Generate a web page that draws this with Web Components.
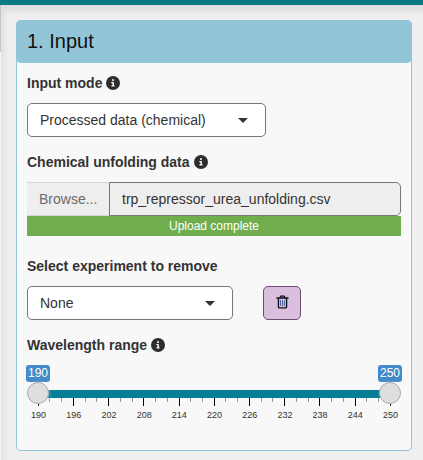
<!DOCTYPE html>
<html lang="en">
<head>
<meta charset="utf-8">
<title>Input</title>
<style>
html,body{margin:0;height:100%}
body{font:14px/20px "Liberation Sans",Arial,sans-serif;color:#333;background:#efefef;overflow:hidden}
</style>
</head>
<body>
<app-shell>
  <input-card heading="1. Input">
    <field-label info>Input mode</field-label>
    <select-box style="width:239px;margin-top:10px">Processed data (chemical)</select-box>
    <field-label info style="margin-top:15px">Chemical unfolding data</field-label>
    <file-field filename="trp_repressor_urea_unfolding.csv" status="Upload complete" style="margin-top:10px"></file-field>
    <field-label style="margin-top:20px">Select experiment to remove</field-label>
    <field-row style="margin-top:10px">
      <select-box style="width:206px">None</select-box>
      <trash-button></trash-button>
    </field-row>
    <field-label info style="margin-top:15px">Wavelength range</field-label>
    <range-slider min="190" max="250" step="6" style="margin-top:10px"></range-slider>
  </input-card>
</app-shell>
<script>
const define = (name, render) => customElements.define(name, class extends HTMLElement {
  connectedCallback() {
    if (this.shadowRoot) return;
    this.attachShadow({mode: 'open'}).innerHTML = '<style>*{box-sizing:border-box}</style>' + render(this);
  }
});

define('app-shell', () => `<style>
:host{display:flex;flex-direction:column;height:100vh}
.bar{height:5px;flex:none;background:#077b83}
.main{flex:1;padding:15px 11px 0 16px;background:
 linear-gradient(#c6c6c6,#c6c6c6) 0 0/1px 47px no-repeat,
 linear-gradient(#f6f6f6,#f6f6f6) 0 0/1px 100% no-repeat,
 linear-gradient(#dcdcdc,rgba(239,239,239,0)) 0 0/100% 10px no-repeat,
 linear-gradient(90deg,#e1e1e1,#efefef) 0 0/9px 100% no-repeat,#efefef}
</style><div class="bar"></div><div class="main"><slot></slot></div>`);

define('input-card', el => `<style>
:host{display:flex;flex-direction:column;box-sizing:border-box;width:396px;height:431px;border:1px solid #93c5d8;border-radius:5px;background:#f8f8f8}
h3{margin:-1px -1px 0;height:43px;padding:0 11px;font:20px/43px "Liberation Sans",Arial,sans-serif;color:#111;background:#93c5d8;border-radius:5px}
.body{padding:10px 10px 0}
</style><h3>${el.getAttribute('heading')}</h3><div class="body"><slot></slot></div>`);

define('field-label', el => `<style>
:host{display:flex;align-items:center;gap:4px;height:20px;font-weight:700}
svg{display:block}
</style><span><slot></slot></span>${el.hasAttribute('info') ? `<svg width="14" height="14" viewBox="0 0 512 512"><circle cx="256" cy="256" r="256" fill="#2d2d2d"/><circle cx="256" cy="150" r="38" fill="#f8f8f8"/><path fill="#f8f8f8" d="M210 216h56c13 0 24 11 24 24v96h8c13 0 24 11 24 24s-11 28-24 28h-84c-13 0-24-15-24-28s11-24 24-24h20v-68h-24c-13 0-24-11-24-26s11-26 24-26z"/></svg>` : ''}`);

define('select-box', () => `<style>
:host{display:flex;align-items:center;justify-content:space-between;box-sizing:border-box;height:34px;padding:0 17px 0 12px;border:1px solid #777;border-radius:5px;background:#fff}
i{border:5px solid transparent;border-top-color:#333;border-bottom:0}
</style><span><slot></slot></span><i></i>`);

define('file-field', el => `<style>
:host{display:block}
.row{display:flex;height:34px;line-height:32px}
.browse{width:82px;padding-left:12px;border:solid #d5d5d5;border-width:1px 0;background:#eee;color:#6b6b6b}
.name{flex:1;padding-left:12px;border:1px solid #777;border-radius:0 5px 5px 0;background:#eee}
.progress{height:20px;border-radius:1px;background:#70ad4c;color:#fff;font-size:12px;line-height:20px;text-align:center}
</style><div class="row"><span class="browse">Browse...</span><span class="name">${el.getAttribute('filename')}</span></div><div class="progress">${el.getAttribute('status')}</div>`);

define('field-row', () => `<style>:host{display:flex;gap:30px}</style><slot></slot>`);

define('trash-button', () => `<style>
:host{display:flex;justify-content:center;box-sizing:border-box;width:38px;height:34px;padding-top:8px;border:1px solid #6f4a75;border-radius:5px;background:#dabfde}
</style><svg width="13" height="14" viewBox="0 0 14 15" fill="none" stroke="#0b0b18"><path stroke-width="1.4" stroke-linecap="round" d="M1 3.2h12"/><path stroke-width="1.3" d="M4.2 3l1-1.9h3.6l1 1.9"/><path stroke-width="1.4" d="M2.6 3.5v9.1q0 1.3 1.3 1.3h6.2q1.3 0 1.3-1.3V3.5"/><path stroke="#3e5c9c" d="M4.9 5.5v6.3M7 5.5v6.3M9.1 5.5v6.3"/></svg>`);

define('range-slider', el => {
  const min = +el.getAttribute('min'), max = +el.getAttribute('max'), step = +el.getAttribute('step');
  const n = (max - min) / step, gap = 352 / n;
  let ticks = '', labels = '';
  for (let i = 0; i <= n * 3; i++) {
    const major = i % 3 === 0;
    ticks += `<rect x="${Math.round(11 + i * gap / 3 - .25)}" y="0" width="1" height="${major ? 8 : 4}" fill="${major ? '#000' : '#999'}"/>`;
    if (major) labels += `<span>${min + i / 3 * step}</span>`;
  }
  return `<style>
:host{display:block;position:relative;width:374px}
.values{display:flex;justify-content:space-between;margin:0 -1px;height:17px}
.values span{width:24px;border-radius:3px;background:#428bca;color:#fff;font-size:12px;line-height:17px;text-align:center}
.track{height:8px;margin:8px 11px 0;background:#067f96}
svg{display:block}
.labels{display:grid;grid-template-columns:repeat(${n + 1},${gap}px);margin:4px 0 0 -6px;font-size:9px;line-height:10px;text-align:center;color:#333}
.handle{position:absolute;top:17px;width:22px;height:22px;border:1px solid #aaa;border-radius:50%;background:#dedede;box-shadow:1px 0 3px rgba(255,255,255,.3)}
.from{left:0}.to{right:0}
</style><div class="values"><span>${min}</span><span>${max}</span></div><div class="track"></div><svg width="374" height="8" shape-rendering="crispEdges">${ticks}</svg><div class="labels">${labels}</div><div class="handle from"></div><div class="handle to"></div>`;
});
</script>
</body>
</html>
